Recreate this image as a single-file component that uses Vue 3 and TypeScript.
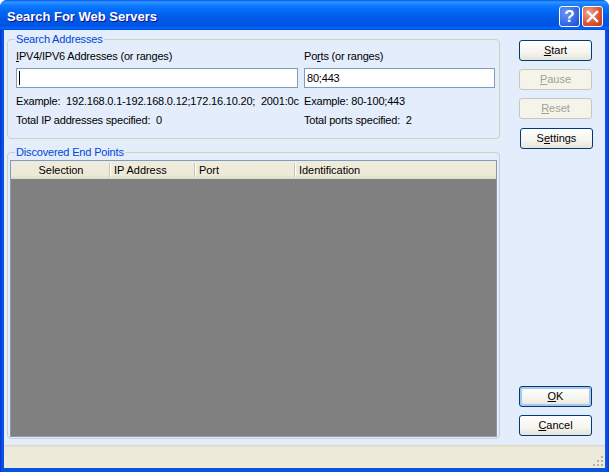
<script setup lang="ts">
interface Action { label: string; key: string; rest: string; pre?: string; disabled?: boolean; nudge?: boolean; primary?: boolean }
const topActions: Action[] = [
  { pre: '', key: 'S', rest: 'tart', label: 'Start' },
  { pre: '', key: 'P', rest: 'ause', label: 'Pause', disabled: true },
  { pre: '', key: 'R', rest: 'eset', label: 'Reset', disabled: true },
  { pre: 'S', key: 'e', rest: 'ttings', label: 'Settings', nudge: true },
]
const bottomActions: Action[] = [
  { pre: '', key: 'O', rest: 'K', label: 'OK', primary: true },
  { pre: '', key: 'C', rest: 'ancel', label: 'Cancel' },
]
const columns = [
  { name: 'Selection', cls: 'c1' },
  { name: 'IP Address', cls: 'c2' },
  { name: 'Port', cls: 'c3' },
  { name: 'Identification', cls: 'c4' },
]
</script>

<template>
  <div class="window">
    <header class="titlebar">
      <span class="title">Search For Web Servers</span>
      <div class="caption-buttons">
        <button class="cap help">?</button>
        <button class="cap close">
          <svg width="13" height="13" viewBox="0 0 13 13"><path d="M2 2 L11 11 M11 2 L2 11" stroke="#fff" stroke-width="2.4" stroke-linecap="square" fill="none" /></svg>
        </button>
      </div>
    </header>
    <div class="client">
      <main class="main">
        <div class="left">
          <fieldset class="group addr">
            <legend>Search Addresses</legend>
            <div class="grid">
              <label class="lbl"><u>I</u>PV4/IPV6 Addresses (or ranges)</label>
              <label class="lbl">Po<u>r</u>ts (or ranges)</label>
              <div class="input wide"><i class="caret"></i></div>
              <div class="input">80;443</div>
              <div class="line clip">Example:&nbsp; 192.168.0.1-192.168.0.12;172.16.10.20;&nbsp; 2001:0c</div>
              <div class="line">Example: 80-100;443</div>
              <div class="line">Total IP addresses specified:&nbsp; 0</div>
              <div class="line">Total ports specified:&nbsp; 2</div>
            </div>
          </fieldset>
          <fieldset class="group found">
            <legend>Discovered End Points</legend>
            <div class="list">
              <div class="list-head">
                <div v-for="c in columns" :key="c.name" class="col" :class="c.cls">{{ c.name }}</div>
              </div>
              <div class="list-body"></div>
            </div>
          </fieldset>
        </div>
        <aside class="actions">
          <div class="stack">
            <button v-for="a in topActions" :key="a.label" class="btn" :class="{ off: a.disabled, nudge: a.nudge }">{{ a.pre }}<u>{{ a.key }}</u>{{ a.rest }}</button>
          </div>
          <div class="stack">
            <button v-for="a in bottomActions" :key="a.label" class="btn" :class="{ primary: a.primary }">{{ a.pre }}<u>{{ a.key }}</u>{{ a.rest }}</button>
          </div>
        </aside>
      </main>
      <footer class="status">
        <svg class="grip" width="12" height="12" viewBox="0 0 12 12">
          <g fill="#b5b29f">
            <rect x="8" y="0" width="2" height="2" />
            <rect x="4" y="4" width="2" height="2" /><rect x="8" y="4" width="2" height="2" />
            <rect x="0" y="8" width="2" height="2" /><rect x="4" y="8" width="2" height="2" /><rect x="8" y="8" width="2" height="2" />
          </g>
        </svg>
      </footer>
    </div>
  </div>
</template>

<style>
html, body { margin: 0; background: #fff; overflow: hidden; }
</style>

<style scoped>
.window {
  width: 609px; height: 472px; box-sizing: border-box;
  display: flex; flex-direction: column;
  background: linear-gradient(90deg, #0831d9 0, #0a4fe6 2px, #0855dd 3px, #0855dd 605px, #0a4fe6 607px, #0831d9 609px);
  border-radius: 7px 7px 0 0; overflow: hidden;
  font: 11px "Liberation Sans", Arial, sans-serif; color: #000;
  padding-bottom: 4px;
}
.titlebar {
  height: 30px; flex: none; box-sizing: border-box;
  display: flex; align-items: center; justify-content: space-between;
  padding: 0 6px 0 7px;
  background: linear-gradient(180deg, #0058ee 0, #3593ff 2px, #288eff 3px, #127dff 5px, #036ffc 9px, #0262ee 14px, #0057e5 20px, #0054e3 24px, #0055eb 26px, #005bf5 27px, #026afe 28px, #0062ef 29px, #0043cf 30px);
}
.title { color: #fff; font-weight: 700; font-size: 13px; margin-top: 3px; text-shadow: 1px 1px 0 #0f1089; }
.caption-buttons { display: flex; gap: 2px; margin-top: 3px; }
.cap {
  width: 21px; height: 21px; padding: 0; border: 1px solid #fff; border-radius: 3px;
  display: flex; align-items: center; justify-content: center;
  color: #fff; font: 700 17px "Liberation Sans", Arial, sans-serif;
}
.help { background: radial-gradient(circle at 30% 30%, #6a96f4, #2e62e0 70%, #1e48c0); }
.close { background: radial-gradient(circle at 30% 30%, #f0a48c, #d95232 60%, #c03a18); }
.client {
  flex: 1; min-height: 0; margin: 0 4px; display: flex; flex-direction: column;
  background: #e3edfc;
}
.main { flex: 1; min-height: 0; display: flex; padding: 3px 0 0 3px; }
.left { width: 493px; display: flex; flex-direction: column; gap: 7px; }
.group {
  margin: 0; min-width: 0; box-sizing: border-box;
  border: 1px solid #d0d0bf; border-radius: 4px;
}
.group legend { color: #0046d5; padding: 0 1px; line-height: 13px; letter-spacing: -0.17px; }
.addr { height: 106px; flex: none; padding: 0 4px 0 8px; }
.addr legend { margin-left: -1px; }
.found { flex: 1; min-height: 0; padding: 1px 2px 1px 2px; display: flex; flex-direction: column; margin-bottom: 6px; }
.found legend { margin-left: 5px; }
.grid { display: grid; grid-template-columns: 288px 191px; grid-template-rows: 18px 20px 20px 19px; margin-top: 4px; letter-spacing: -0.19px; }
.lbl { line-height: 13px; }
.input {
  box-sizing: border-box; height: 20px; background: #fff; border: 1px solid #7f9db9;
  padding-left: 2px; line-height: 18px; display: flex; align-items: center;
}
.wide { width: 282px; }
.caret { width: 1px; height: 14px; background: #000; }
.line { align-self: end; line-height: 13px; white-space: nowrap; }
.clip { overflow: hidden; width: 286px; }
.list { flex: 1; min-height: 0; height: 275px; display: flex; flex-direction: column; border: 1px solid #7f9db9; }
.list-head {
  height: 18px; flex: none; display: flex; align-items: center;
  background: linear-gradient(180deg, #efecdd, #ece9d8 80%, #dcd9c6);
  letter-spacing: -0.04px;
}
.col { box-sizing: border-box; height: 14px; line-height: 14px; border-right: 1px solid #c7c5b2; box-shadow: 1px 0 0 #fff; padding-left: 4px; }
.c1 { width: 99px; text-align: center; padding-right: 2px; }
.c2 { width: 85px; }
.c3 { width: 100px; padding-left: 4px; }
.c4 { border-right: 0; box-shadow: none; padding-left: 4px; }
.list-body { flex: 1; background: #808080; }
.actions { flex: 1; display: flex; flex-direction: column; justify-content: space-between; padding: 7px 0 9px 19px; }
.stack { display: flex; flex-direction: column; gap: 8px; align-items: flex-start; }
.btn {
  width: 73px; height: 21px; padding: 0 0 2px; box-sizing: border-box;
  border: 1px solid #003c74; border-radius: 3px;
  background: linear-gradient(180deg, #fff 0, #f5f4ee 60%, #e6e3d8 100%);
  font: 11px "Liberation Sans", Arial, sans-serif; color: #000;
}
.btn.off { border-color: #c9c7ba; background: #f5f4ea; color: #a1a192; }
.btn.nudge { margin-left: 1px; margin-top: 1px; }
.btn.primary { box-shadow: inset 0 0 0 2px #a9c6ef; }
.status {
  height: 23px; flex: none; display: flex; justify-content: flex-end; align-items: flex-end;
  background: linear-gradient(180deg, #d6d3c0 0, #ece9d8 2px, #eeebdc 100%);
}
</style>
